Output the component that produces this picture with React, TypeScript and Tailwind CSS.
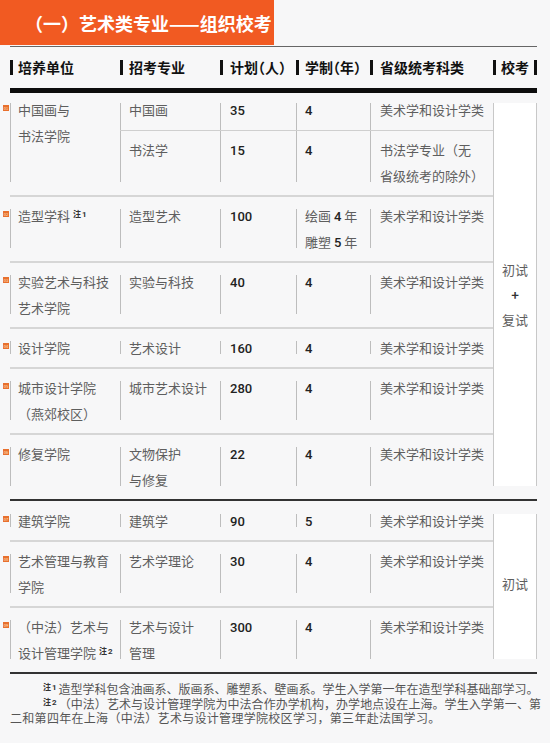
import React from "react";

const COL1 = "w-[110px]";
const COL2 = "w-[100px]";
const COL3 = "w-[76px]";
const COL4 = "w-[74px]";
const COL5 = "w-[123px]";

function Badge({ n }: { n: string }) {
  return (
    <span className="absolute left-[-8px] top-[2px] flex h-[6px] w-[6px] items-center justify-center overflow-hidden bg-[#e8702e] text-[4px] leading-none text-[#ffe2cc]">
      {n}
    </span>
  );
}

function Cell({
  w,
  pl,
  outer = "",
  top = true,
  bottom = true,
  badge,
  children,
}: {
  w: string;
  pl: string;
  outer?: string;
  top?: boolean;
  bottom?: boolean;
  badge?: string;
  children: React.ReactNode;
}) {
  return (
    <div className={`relative flex shrink-0 flex-col border-l border-[#bdbdbd] ${w} ${outer}`}>
      {badge && <Badge n={badge} />}
      <div className={`${pl} leading-[26px] ${top ? "-mt-[6.5px]" : ""} ${bottom ? "-mb-[6.5px]" : ""}`}>
        {children}
      </div>
    </div>
  );
}

function Num({ children }: { children: React.ReactNode }) {
  return <span className="leading-none font-medium text-[#222] [font-family:Roboto,sans-serif]">{children}</span>;
}

function Note({ n }: { n: string }) {
  return (
    <span className="mr-[2px] ml-[3px] inline-block text-[8px] leading-none font-bold text-[#333] [vertical-align:4px]">
      注<span className="ml-[1px] [font-family:Roboto,sans-serif]">{n}</span>
    </span>
  );
}

type RowData = {
  n: string;
  unit: React.ReactNode;
  major: React.ReactNode;
  plan: string;
  years: React.ReactNode;
  subject?: React.ReactNode;
};

function Row({ d, last }: { d: RowData; last?: boolean }) {
  return (
    <div className={`flex pt-[12px] pb-[13px] ${last ? "" : "border-b-2 border-[#d6d6d6]"}`}>
      <Cell w={COL1} pl="pl-[7px]" badge={d.n}>
        {d.unit}
      </Cell>
      <Cell w={COL2} pl="pl-[8px]">
        {d.major}
      </Cell>
      <Cell w={COL3} pl="pl-[9px]">
        <Num>{d.plan}</Num>
      </Cell>
      <Cell w={COL4} pl="pl-[8px]">
        {d.years}
      </Cell>
      <Cell w={COL5} pl="pl-[9px]">
        {d.subject ?? "美术学和设计学类"}
      </Cell>
    </div>
  );
}

const group1: RowData[] = [
  {
    n: "02",
    unit: (
      <>
        造型学科
        <Note n="1" />
      </>
    ),
    major: "造型艺术",
    plan: "100",
    years: (
      <>
        绘画 <Num>4</Num> 年<br />
        雕塑 <Num>5</Num> 年
      </>
    ),
  },
  {
    n: "03",
    unit: (
      <>
        实验艺术与科技
        <br />
        艺术学院
      </>
    ),
    major: "实验与科技",
    plan: "40",
    years: <Num>4</Num>,
  },
  { n: "04", unit: "设计学院", major: "艺术设计", plan: "160", years: <Num>4</Num> },
  {
    n: "05",
    unit: (
      <>
        城市设计学院
        <br />
        （燕郊校区）
      </>
    ),
    major: "城市艺术设计",
    plan: "280",
    years: <Num>4</Num>,
  },
  {
    n: "06",
    unit: "修复学院",
    major: (
      <>
        文物保护
        <br />
        与修复
      </>
    ),
    plan: "22",
    years: <Num>4</Num>,
  },
];

const group2: RowData[] = [
  { n: "07", unit: "建筑学院", major: "建筑学", plan: "90", years: <Num>5</Num> },
  {
    n: "08",
    unit: (
      <>
        艺术管理与教育
        <br />
        学院
      </>
    ),
    major: "艺术学理论",
    plan: "30",
    years: <Num>4</Num>,
  },
  {
    n: "09",
    unit: (
      <>
        （中法）艺术与
        <br />
        设计管理学院
        <Note n="2" />
      </>
    ),
    major: (
      <>
        艺术与设计
        <br />
        管理
      </>
    ),
    plan: "300",
    years: <Num>4</Num>,
  },
];

function HeadCell({ w, ml, label }: { w: string; ml: string; label: string }) {
  return (
    <div className={`flex shrink-0 items-center ${w}`}>
      <span className="h-[15px] w-[3px] bg-[#111]" />
      <span className={`${ml} text-[14px] font-bold text-[#111] [font-feature-settings:'halt']`}>{label}</span>
    </div>
  );
}

export default function App() {
  return (
    <div className="h-[743px] w-[550px] overflow-hidden bg-[#f7f7f8] text-[13px] text-[#5e5e5e] [font-family:'Noto_Sans_CJK_SC',sans-serif]">
      {/* Title banner */}
      <div className="flex h-[45px] w-[274px] items-center bg-[#f15a22] pt-[1px] pl-[25px] text-[18px] font-bold text-white">
        （一）艺术类专业——组织校考
      </div>

      <div className="mx-[10px] w-[527px]">
        <div className="mt-[1px] h-px bg-[#666]" />

        {/* Header */}
        <div className="my-[13px] flex h-[15px]">
          <HeadCell w={COL1} ml="ml-[5px]" label="培养单位" />
          <HeadCell w={COL2} ml="ml-[6px]" label="招考专业" />
          <HeadCell w={COL3} ml="ml-[7px]" label="计划（人）" />
          <HeadCell w={COL4} ml="ml-[6px]" label="学制（年）" />
          <HeadCell w={COL5} ml="ml-[7px]" label="省级统考科类" />
          <div className="flex flex-1 items-center">
            <span className="h-[15px] w-[3px] bg-[#111]" />
            <span className="ml-[5px] text-[14px] font-bold text-[#111]">校考</span>
            <span className="ml-auto h-[15px] w-[3px] bg-[#111]" />
          </div>
        </div>
        <div className="h-[5px] bg-[#0d0d0d]" />

        {/* Group 1 */}
        <div className="flex">
          <div className="w-[483px]">
            <div className="flex border-b-2 border-[#d6d6d6] pt-[10px] pb-[13px]">
              <Cell w={COL1} pl="pl-[7px]" badge="01">
                中国画与
                <br />
                书法学院
              </Cell>
              <div className="flex flex-col">
                <div className="flex border-b border-[#cfcfcf]">
                  <Cell w={COL2} pl="pl-[8px]" outer="pb-[7px]" bottom={false}>
                    中国画
                  </Cell>
                  <Cell w={COL3} pl="pl-[9px]" outer="pb-[7px]" bottom={false}>
                    <Num>35</Num>
                  </Cell>
                  <Cell w={COL4} pl="pl-[8px]" outer="pb-[7px]" bottom={false}>
                    <Num>4</Num>
                  </Cell>
                  <Cell w={COL5} pl="pl-[9px]" outer="pb-[7px]" bottom={false}>
                    美术学和设计学类
                  </Cell>
                </div>
                <div className="flex">
                  <Cell w={COL2} pl="pl-[8px]" outer="pt-[6px]" top={false}>
                    书法学
                  </Cell>
                  <Cell w={COL3} pl="pl-[9px]" outer="pt-[6px]" top={false}>
                    <Num>15</Num>
                  </Cell>
                  <Cell w={COL4} pl="pl-[8px]" outer="pt-[6px]" top={false}>
                    <Num>4</Num>
                  </Cell>
                  <Cell w={COL5} pl="pl-[9px]" outer="pt-[6px]" top={false}>
                    书法学专业（无
                    <br />
                    省级统考的除外）
                  </Cell>
                </div>
              </div>
            </div>
            {group1.map((d, i) => (
              <Row key={d.n} d={d} last={i === group1.length - 1} />
            ))}
          </div>
          <div className="mt-[10px] mb-[13px] flex w-[44px] flex-col items-center justify-center border-x border-[#c8c8c8] bg-white leading-[25px]">
            <span>初试</span>
            <span className="font-bold text-[#333]">+</span>
            <span>复试</span>
          </div>
        </div>
        <div className="h-[2px] bg-[#333]" />

        {/* Group 2 */}
        <div className="flex">
          <div className="w-[483px] pt-px">
            {group2.map((d, i) => (
              <Row key={d.n} d={d} last={i === group2.length - 1} />
            ))}
          </div>
          <div className="mt-[13px] mb-[13px] flex w-[44px] items-center justify-center border-x border-[#c8c8c8] bg-white pb-[6px]">
            初试
          </div>
        </div>
        <div className="h-[2px] bg-[#333]" />

        {/* Footnotes */}
        <div className="mt-[8px] w-[531px] text-[12px] leading-[14.5px] text-[#555]">
          <div className="pl-[30px]">
            <Note n="1" />
            造型学科包含油画系、版画系、雕塑系、壁画系。学生入学第一年在造型学科基础部学习。
          </div>
          <div className="pl-[30px] [text-align-last:justify]">
            <Note n="2" />
            （中法）艺术与设计管理学院为中法合作办学机构，办学地点设在上海。学生入学第一、第
          </div>
          <div className="tracking-[0.3px]">二和第四年在上海（中法）艺术与设计管理学院校区学习，第三年赴法国学习。</div>
        </div>
      </div>
    </div>
  );
}
